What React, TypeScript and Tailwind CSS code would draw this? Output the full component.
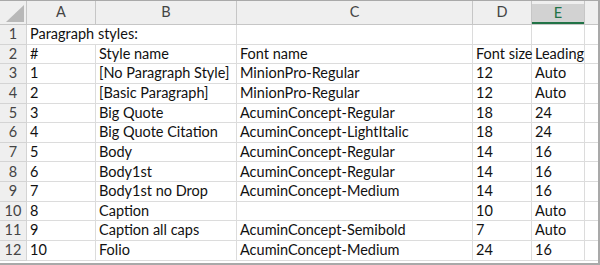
const columns = ['A', 'B', 'C', 'D', 'E'];

// one entry per sheet row; empty strings are blank cells
const rows: string[][] = [
  ['Paragraph styles:', '', '', '', ''],
  ['#', 'Style name', 'Font name', 'Font size', 'Leading'],
  ['1', '[No Paragraph Style]', 'MinionPro-Regular', '12', 'Auto'],
  ['2', '[Basic Paragraph]', 'MinionPro-Regular', '12', 'Auto'],
  ['3', 'Big Quote', 'AcuminConcept-Regular', '18', '24'],
  ['4', 'Big Quote Citation', 'AcuminConcept-LightItalic', '18', '24'],
  ['5', 'Body', 'AcuminConcept-Regular', '14', '16'],
  ['6', 'Body1st', 'AcuminConcept-Regular', '14', '16'],
  ['7', 'Body1st no Drop', 'AcuminConcept-Medium', '14', '16'],
  ['8', 'Caption', '', '10', 'Auto'],
  ['9', 'Caption all caps', 'AcuminConcept-Semibold', '7', 'Auto'],
  ['10', 'Folio', 'AcuminConcept-Medium', '24', '16'],
];

function CornerCell() {
  return (
    <div className="bg-[#efefef] border-r border-b border-[#c6c6c6] flex items-end justify-end pr-[2px] pb-[2px]">
      <svg width="18" height="17" viewBox="0 0 18 17">
        <polygon points="18,0 18,17 0,17" fill="#b8b8b8" />
      </svg>
    </div>
  );
}

function ColumnHeader({ label, selected }: { label: string; selected: boolean }) {
  if (selected) {
    return (
      <div className="bg-[#efefef] border-r border-b border-[#c6c6c6] pt-[3px]">
        <div className="h-full bg-[#d2d2d2] border-b-2 border-[#217346] flex items-center justify-center text-[#217346]">
          {label}
        </div>
      </div>
    );
  }
  return (
    <div className="bg-[#efefef] border-r border-b border-[#c6c6c6] flex items-center justify-center text-[#444]">
      {label}
    </div>
  );
}

export default function App() {
  return (
    <div
      className="w-[600px] h-[265px] bg-white border-t border-[#a9a9a9] border-r-2 border-b-2 overflow-hidden text-[14.5px] text-[#111] leading-none"
      style={{ fontFamily: 'Lato, "Open Sans", sans-serif' }}
    >
      <div className="grid grid-cols-[27px_69px_141px_236px_59px_53px_1fr] grid-rows-[24px_repeat(12,19.65px)]">
        <CornerCell />
        {columns.map((c) => (
          <ColumnHeader key={c} label={c} selected={c === 'E'} />
        ))}
        <div className="bg-[#efefef] border-b border-[#c6c6c6]" />

        {rows.map((row, i) => (
          <div key={i} className="contents">
            <div className="bg-[#efefef] border-r border-b border-[#d4d4d4] flex items-center justify-center text-[#444]">
              {i + 1}
            </div>
            {row.map((cell, j) => (
              <div
                key={j}
                className={
                  j === 0 && i === 0
                    ? 'border-b border-[#dcdcdc] flex items-center pl-[3px] whitespace-nowrap'
                    : 'border-r border-b border-[#dcdcdc] flex items-center pl-[3px] whitespace-nowrap'
                }
              >
                {cell}
              </div>
            ))}
            <div className="border-b border-[#dcdcdc]" />
          </div>
        ))}
      </div>
    </div>
  );
}
